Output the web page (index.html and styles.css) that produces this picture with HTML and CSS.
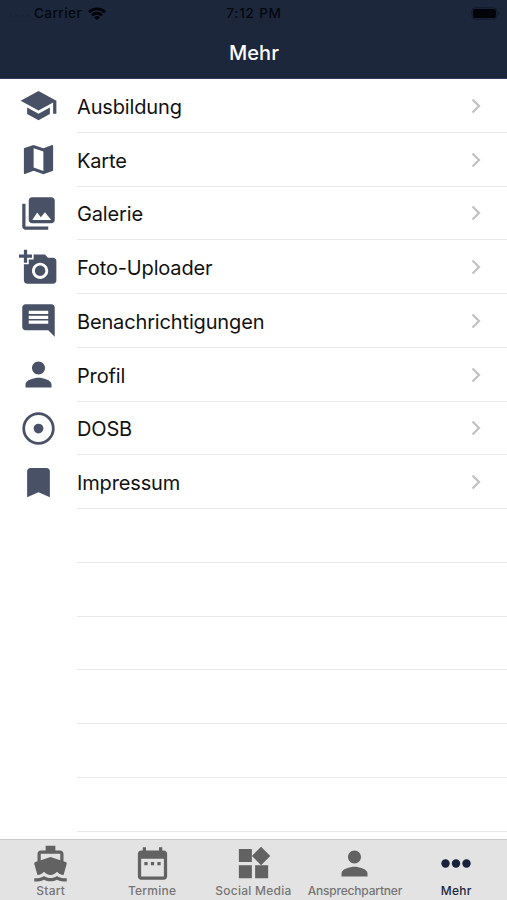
FILE: index.html
```html
<!DOCTYPE html>
<html lang="de">
<head>
<meta charset="utf-8">
<title>Mehr</title>
<link rel="stylesheet" href="styles.css">
</head>
<body>
<div class="app">
  <header class="header">
    <div class="status">
      <div class="status-left">
        <span class="signal"><i></i><i></i><i></i><i></i></span>
        <span class="carrier">Carrier</span>
        <svg class="wifi" viewBox="0 0 18 13"><path d="M0 4.2a12.8 12.8 0 0 1 18 0L16.100 6.200a10 10 0 0 0-14.200 0zM3 7.300a8.500 8.500 0 0 1 12 0L13 9.300a5.700 5.700 0 0 0-8 0zM6.100 10.400a4.100 4.100 0 0 1 5.800 0L9 13z"/></svg>
      </div>
      <span class="time">7:12 PM</span>
      <div class="status-right"><svg class="battery" viewBox="0 0 30 13"><rect class="battery-case" x=".8" y=".8" width="25.400" height="11.400" rx="3.500"/><rect x="2" y="2" width="23" height="9" rx="2"/><path class="battery-tip" d="M27.500 4.500q2 2 0 4z"/></svg></div>
    </div>
    <h1 class="title">Mehr</h1>
  </header>
  <main class="list">
    <a class="row"><svg class="icon" viewBox="0 0 24 24"><path d="M5 13.180v4L12 21l7-3.820v-4L12 17l-7-3.820zM12 3L1 9l11 6 9-4.910V17h2V9L12 3z"/></svg><span class="label">Ausbildung</span><svg class="chevron" viewBox="0 0 10 16"><path d="M1.500 1.500L8 8l-6.500 6.500"/></svg></a>
    <a class="row"><svg class="icon" viewBox="0 0 24 24"><path d="M20.500 3l-.16.030L15 5.100 9 3 3.360 4.900c-.21.070-.36.250-.36.480V20.500c0 .28.220.5.500.5l.16-.03L9 18.900l6 2.100 5.640-1.900c.21-.07.360-.25.360-.48V3.500c0-.28-.22-.5-.5-.5zM15 19l-6-2.110V5l6 2.110V19z"/></svg><span class="label">Karte</span><svg class="chevron" viewBox="0 0 10 16"><path d="M1.500 1.500L8 8l-6.500 6.500"/></svg></a>
    <a class="row"><svg class="icon" viewBox="0 0 24 24"><path d="M22 16V4c0-1.100-.9-2-2-2H8c-1.100 0-2 .9-2 2v12c0 1.100.9 2 2 2h12c1.100 0 2-.9 2-2zM8.200 16l3-4.600 2.200 2.900L16 11.200l3.800 4.800zM2 6v14c0 1.100.9 2 2 2h14v-2H4V6H2z"/></svg><span class="label">Galerie</span><svg class="chevron" viewBox="0 0 10 16"><path d="M1.500 1.500L8 8l-6.500 6.500"/></svg></a>
    <a class="row"><svg class="icon" viewBox="0 0 24 24"><path d="M3 4V1h2v3h3v2H5v3H3V6H0V4h3zm3 6V7h3V4h7l1.830 2H21c1.100 0 2 .9 2 2v12c0 1.100-.9 2-2 2H5c-1.100 0-2-.9-2-2V10h3zm7 9c2.760 0 5-2.240 5-5s-2.240-5-5-5-5 2.240-5 5 2.240 5 5 5zm-3.200-5c0 1.770 1.430 3.200 3.200 3.200s3.200-1.430 3.200-3.200-1.430-3.200-3.200-3.200-3.200 1.430-3.200 3.200z"/></svg><span class="label">Foto-Uploader</span><svg class="chevron" viewBox="0 0 10 16"><path d="M1.500 1.500L8 8l-6.500 6.500"/></svg></a>
    <a class="row"><svg class="icon" viewBox="0 0 24 24"><path d="M21.990 4c0-1.100-.89-2-1.990-2H4c-1.100 0-2 .9-2 2v12c0 1.100.9 2 2 2h14l4 4-.01-18zM18 14H6v-2h12v2zm0-3H6V9h12v2zm0-3H6V6h12v2z"/></svg><span class="label">Benachrichtigungen</span><svg class="chevron" viewBox="0 0 10 16"><path d="M1.500 1.500L8 8l-6.500 6.500"/></svg></a>
    <a class="row"><svg class="icon" viewBox="0 0 24 24"><path d="M12 12c2.210 0 4-1.790 4-4s-1.790-4-4-4-4 1.790-4 4 1.790 4 4 4zm0 2c-2.670 0-8 1.340-8 4v2h16v-2c0-2.660-5.330-4-8-4z"/></svg><span class="label">Profil</span><svg class="chevron" viewBox="0 0 10 16"><path d="M1.500 1.500L8 8l-6.500 6.500"/></svg></a>
    <a class="row"><svg class="icon" viewBox="0 0 24 24"><circle class="ring" cx="12" cy="12" r="9.100"/><circle cx="12" cy="12" r="3"/></svg><span class="label">DOSB</span><svg class="chevron" viewBox="0 0 10 16"><path d="M1.500 1.500L8 8l-6.500 6.500"/></svg></a>
    <a class="row"><svg class="icon" viewBox="0 0 24 24"><path d="M17 3H7c-1.100 0-2 .9-2 2v16l7-3 7 3V5c0-1.100-.9-2-2-2z"/></svg><span class="label">Impressum</span><svg class="chevron" viewBox="0 0 10 16"><path d="M1.500 1.500L8 8l-6.500 6.500"/></svg></a>
    <div class="row"></div>
    <div class="row"></div>
    <div class="row"></div>
    <div class="row"></div>
    <div class="row"></div>
    <div class="row"></div>
  </main>
  <nav class="tabs">
    <a class="tab"><svg class="icon" viewBox="0 0 24 24"><path d="M20 21c-1.390 0-2.780-.47-4-1.320-2.440 1.710-5.560 1.710-8 0C6.780 20.530 5.390 21 4 21H2v2h2c1.380 0 2.740-.35 4-.99 2.520 1.290 5.480 1.290 8 0 1.260.650 2.620.990 4 .990h2v-2h-2zM3.950 19H4c1.600 0 3.020-.88 4-2 .98 1.120 2.400 2 4 2s3.020-.88 4-2c.98 1.120 2.400 2 4 2h.05l1.890-6.680c.08-.26.060-.54-.06-.78s-.34-.42-.6-.5L20 10.620V6c0-1.100-.9-2-2-2h-3V1H9v3H6c-1.100 0-2 .9-2 2v4.620l-1.290.420c-.26.080-.48.260-.6.500s-.15.520-.06.780L3.950 19zM6 6h12v3.970L12 8 6 9.970V6z"/></svg><span class="tab-label">Start</span></a>
    <a class="tab"><svg class="icon" viewBox="0 0 24 24"><path d="M9 11H7v2h2v-2zm4 0h-2v2h2v-2zm4 0h-2v2h2v-2zm2-7h-1V2h-2v2H8V2H6v2H5c-1.110 0-2 .9-2 2v14c0 1.100.890 2 2 2h14c1.100 0 2-.9 2-2V6c0-1.100-.9-2-2-2zm0 16H5V9h14v11z"/></svg><span class="tab-label">Termine</span></a>
    <a class="tab"><svg class="icon" viewBox="0 0 24 24"><path d="M13 13v8h8v-8h-8zM3 21h8v-8H3v8zM3 3v8h8V3H3zm13.660-1.310L11 7.340 16.660 13l5.660-5.660-5.660-5.650z"/></svg><span class="tab-label">Social Media</span></a>
    <a class="tab"><svg class="icon" viewBox="0 0 24 24"><path d="M12 12c2.210 0 4-1.790 4-4s-1.790-4-4-4-4 1.790-4 4 1.790 4 4 4zm0 2c-2.670 0-8 1.340-8 4v2h16v-2c0-2.660-5.330-4-8-4z"/></svg><span class="tab-label tight">Ansprechpartner</span></a>
    <a class="tab active"><svg class="icon" viewBox="0 0 39 39"><circle cx="8.500" cy="19.500" r="4.200"/><circle cx="19" cy="19.500" r="4.200"/><circle cx="29.500" cy="19.500" r="4.200"/></svg><span class="tab-label">Mehr</span></a>
  </nav>
</div>
</body>
</html>
```
FILE: styles.css
```css
* { box-sizing: border-box; }
body {
  margin: 0;
  font-family: Inter, "Liberation Sans", sans-serif;
  background: #fff;
}
.app {
  display: flex;
  flex-direction: column;
  width: 507px;
  height: 900px;
  overflow: hidden;
}
.header {
  flex: none;
  height: 79px;
  background: #1c273b;
  border-bottom: 1px solid #34395a;
}
.status {
  display: grid;
  grid-template-columns: 1fr auto 1fr;
  align-items: center;
  height: 26px;
  padding: 0 7px 0 8px;
  color: #05080f;
  font-size: 13.5px;
  font-weight: 500;
  letter-spacing: .45px;
}
.status svg { display: block; fill: #020409; }
.status-left { display: flex; align-items: center; }
.signal { display: flex; gap: 3px; width: 26px; padding: 4px 0 0 1px; }
.signal i { width: 3px; height: 3px; border-radius: 50%; background: #192337; }
.time { letter-spacing: .8px; }
.wifi { width: 18px; height: 13px; margin-left: 6px; }
.status-right { display: flex; justify-content: flex-end; }
.battery { width: 30px; height: 13px; margin-right: -1px; }
.status .battery-case { fill: none; stroke: #121a2a; }
.status .battery-tip { fill: #121a2a; }
.title {
  margin: 0;
  padding-left: 1px;
  color: #fff;
  font-size: 20px;
  font-weight: 500;
  line-height: 54px;
  text-align: center;
}
.list { flex: 1; min-height: 0; overflow: hidden; }
.row {
  display: flex;
  align-items: center;
  height: 53.78px;
  padding: 0 26px 0 19px;
  background: linear-gradient(#e9e9eb, #e9e9eb) 77px 100% / 100% 1px no-repeat;
}
.icon { flex: none; width: 39px; height: 39px; fill: #485165; }
.ring { fill: none; stroke: #485165; stroke-width: 1.700; }
.label {
  flex: 1;
  margin-left: 19px;
  padding-top: 2px;
  color: #111;
  font-size: 20px;
  letter-spacing: -.15px;
}
.chevron {
  width: 10px;
  height: 16px;
  fill: none;
  stroke: #c1c1c4;
  stroke-width: 2.200;
}
.tabs {
  flex: none;
  display: grid;
  grid-template-columns: repeat(5, 1fr);
  height: 61px;
  padding-top: 4px;
  background: #e3e3e3;
  border-top: 1px solid #c9c9c9;
}
.tab { display: flex; flex-direction: column; align-items: center; color: #757575; }
.tab .icon { fill: #626262; }
.tab-label { font-size: 12px; font-weight: 500; line-height: 16px; white-space: nowrap; letter-spacing: .25px; }
.tight { letter-spacing: -.2px; }
.active { color: #1c273b; }
.tab.active .icon { fill: #17233b; }
```
